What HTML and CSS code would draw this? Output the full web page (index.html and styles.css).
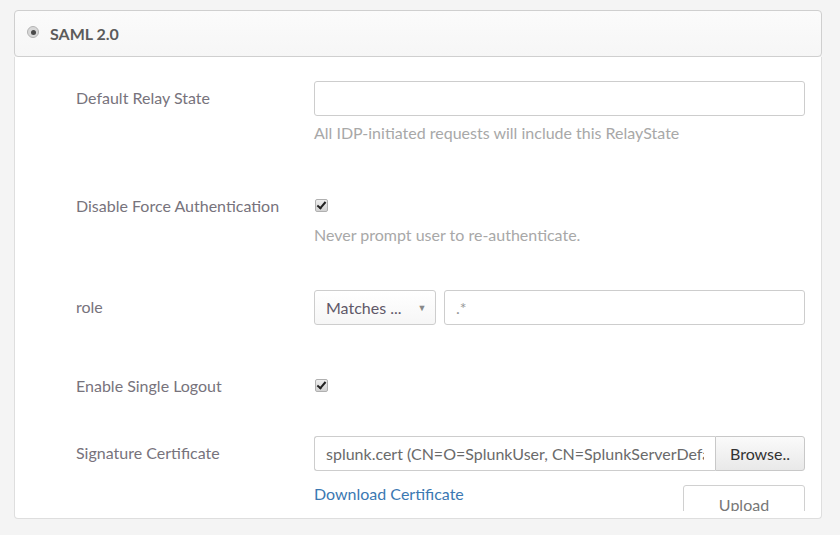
FILE: index.html
```html
<!DOCTYPE html>
<html lang="en">
<head>
    <meta charset="UTF-8">
    <title>SAML 2.0</title>
    <link rel="stylesheet" href="styles.css">
</head>
<body>
    <div class="panel">
        <div class="panel-head">
            <span class="radio"></span>
            <span class="head-title">SAML 2.0</span>
        </div>
        <div class="panel-body">
            <div class="row row-relay">
                <label class="lbl">Default Relay State</label>
                <div class="ctl">
                    <input class="txt" type="text">
                    <p class="help">All IDP-initiated requests will include this RelayState</p>
                </div>
            </div>

            <div class="row row-force">
                <label class="lbl">Disable Force Authentication</label>
                <div class="ctl">
                    <div class="check-wrap"><span class="check"></span></div>
                    <p class="help help-check">Never prompt user to re-authenticate.</p>
                </div>
            </div>

            <div class="row row-role">
                <label class="lbl">role</label>
                <div class="ctl ctl-split">
                    <div class="select">Matches ... <span class="caret">&#9660;</span></div>
                    <input class="txt txt-val" type="text" value=".*">
                </div>
            </div>

            <div class="row row-logout">
                <label class="lbl">Enable Single Logout</label>
                <div class="ctl">
                    <div class="check-wrap"><span class="check"></span></div>
                </div>
            </div>

            <div class="row row-cert">
                <label class="lbl">Signature Certificate</label>
                <div class="ctl">
                    <div class="file-group">
                        <input class="txt txt-file" type="text" value="splunk.cert (CN=O=SplunkUser, CN=SplunkServerDefaultCert)">
                        <button class="btn btn-browse">Browse..</button>
                    </div>
                    <div class="cert-actions">
                        <a class="link" href="#">Download Certificate</a>
                        <button class="btn btn-upload">Upload</button>
                    </div>
                </div>
            </div>
        </div>
    </div>
</body>
</html>
```

FILE: styles.css
```css
body { margin: 0; background-color: #f4f4f4; font-family: Lato, "Liberation Sans", sans-serif; font-size: 16px; color: #666; }

.panel { width: 808px; margin: 10px 0 0 14px; }

.panel-head {
    height: 45px;
    display: flex;
    align-items: center;
    padding-left: 12px;
    border: 1px solid #cfcfcf;
    border-radius: 4px;
    background: linear-gradient(#fbfbfb, #f6f6f6);
}
.radio {
    box-sizing: border-box;
    width: 12px;
    height: 12px;
    border: 1px solid #b4b4b4;
    border-radius: 50%;
    background: #d8d8d8;
    margin-top: -3px;
    display: flex;
    align-items: center;
    justify-content: center;
}
.radio::after { content: ""; width: 5px; height: 5px; border-radius: 50%; background: #4a4a4a; }
.head-title { margin-left: 11px; font-size: 16px; font-weight: 700; color: #5b5b5b; }

.panel-body {
    height: 437px;
    padding: 24px 16px 0 61px;
    background: #fff;
    border: 1px solid #dedede;
    border-top: 0;
    border-radius: 0 0 4px 4px;
    overflow: hidden;
}

.row { display: flex; }
.row-force { margin-top: 47px; }
.row-role { margin-top: 46px; }
.row-logout { margin-top: 44px; }
.row-cert { margin-top: 35px; }

.lbl { width: 238px; flex: none; padding-top: 7px; line-height: 20px; color: #77737c; }
.ctl { width: 492px; }
.ctl-split { display: flex; gap: 8px; }

.txt {
    display: block;
    box-sizing: border-box;
    width: 100%;
    height: 35px;
    margin: 0;
    padding: 0 11px;
    border: 1px solid #cdcdcd;
    border-radius: 3px;
    background: #fff;
    font-family: inherit;
    font-size: 16px;
    color: #5a5a5a;
    outline: none;
}
.txt-val { color: #999; }

.help { margin: 8px 0 0; line-height: 18px; font-size: 16px; color: #a8a8a8; }
.help-check { margin-top: 5px; }

.check-wrap { height: 32px; display: flex; align-items: center; }
.check {
    width: 11px;
    height: 11px;
    margin-left: 1px;
    border: 1px solid #b0b0b0;
    border-radius: 2px;
    background: linear-gradient(#eee, #d2d2d2);
    position: relative;
}
.check::after {
    content: "";
    position: absolute;
    left: 3px;
    top: 0px;
    width: 3px;
    height: 7px;
    border: solid #222;
    border-width: 0 2px 2px 0;
    transform: rotate(40deg);
}

.select {
    box-sizing: border-box;
    width: 122px;
    height: 35px;
    flex: none;
    display: flex;
    align-items: center;
    padding-left: 11px;
    border: 1px solid #cdcdcd;
    border-radius: 3px;
    background: linear-gradient(#fff, #f6f6f6);
    color: #5f5868;
}
.caret { margin-left: 16px; font-size: 9px; color: #888; }

.file-group { display: flex; }
.txt-file { border-radius: 3px 0 0 3px; border-right: 0; color: #6a6a6a; }

.btn {
    box-sizing: border-box;
    border: 1px solid #c8c8c8;
    border-radius: 3px;
    background: linear-gradient(#fafafa, #e9e9e9);
    font-family: inherit;
    font-size: 16px;
    color: #333;
}
.btn-browse { width: 90px; height: 35px; flex: none; border-radius: 0 3px 3px 0; }

.cert-actions { display: flex; justify-content: space-between; height: 40px; overflow: hidden; }
.link { margin-top: 14px; line-height: 18px; color: #3b78b2; text-decoration: none; }
.btn-upload {
    width: 122px;
    height: 38px;
    margin-top: 14px;
    padding: 0;
    background: #fff;
    border-color: #d0d0d0;
    color: #777;
}
```
